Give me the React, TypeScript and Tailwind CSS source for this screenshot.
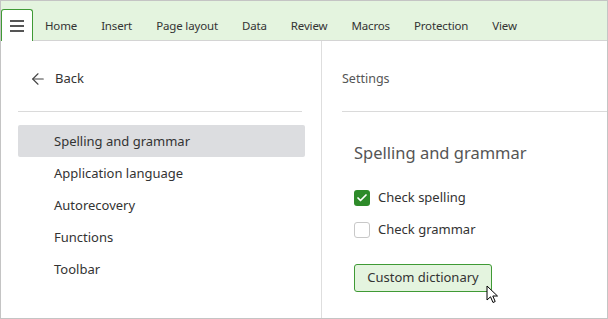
import { ArrowLeft, Check } from 'lucide-react';

const tabs = ['Home', 'Insert', 'Page layout', 'Data', 'Review', 'Macros', 'Protection', 'View'];
const sections = ['Spelling and grammar', 'Application language', 'Autorecovery', 'Functions', 'Toolbar'];

function Cursor() {
  return (
    <svg width="14" height="20" viewBox="0 0 14 20" className="absolute left-[485px] top-[284px]">
      <path d="M1 1 L1 15 L4.5 11.8 L7 17.5 L9.2 16.5 L6.8 11 L11.5 11 Z" fill="#fff" stroke="#000" strokeWidth="1" strokeLinejoin="round" />
    </svg>
  );
}

export default function App() {
  return (
    <div
      className="relative w-[608px] h-[319px] border border-[#c4c4c4] bg-white flex flex-col text-[#333] overflow-hidden"
      style={{ fontFamily: '"Noto Sans", "Open Sans", sans-serif' }}
    >
      <div className="h-[40px] shrink-0 bg-[#e4f4df] border-b border-[#d4d4d4] flex items-end">
        <button className="w-8 h-8 -mb-px bg-white border border-b-0 border-[#3f9a35] rounded-t-[3px] flex flex-col items-center justify-center gap-[3px]">
          <span className="block w-[14px] h-[2px] bg-[#555]" />
          <span className="block w-[14px] h-[2px] bg-[#555]" />
          <span className="block w-[14px] h-[2px] bg-[#555]" />
        </button>
        {tabs.map((t) => (
          <div key={t} className="h-8 px-3 pt-[3px] flex items-center text-[11.5px] tracking-[-0.15px] text-[#333]">
            {t}
          </div>
        ))}
      </div>

      <div className="flex flex-1 min-h-0">
        <div className="w-[321px] shrink-0 border-r border-[#dedede] pl-[17px] pr-[16px] pt-[22px]">
          <div className="h-8 flex items-center pl-[11px] gap-[8px] text-[13px]">
            <ArrowLeft size={18} strokeWidth={1.5} className="text-[#444]" />
            <span>Back</span>
          </div>
          <div className="mt-4 mr-[3px] border-t border-[#dadada]" />
          <div className="mt-[13px] flex flex-col">
            {sections.map((s, i) => (
              <div
                key={s}
                className={`h-8 pt-[2px] flex items-center pl-9 text-[13px] rounded-[2px] ${i === 0 ? 'bg-[#dcdde0]' : ''}`}
              >
                {s}
              </div>
            ))}
          </div>
        </div>

        <div className="flex-1 pl-5 pt-[22px]">
          <div className="h-8 flex items-center text-[12.5px] text-[#555]">Settings</div>
          <div className="mt-4 border-t border-[#dadada]" />
          <div className="pl-3">
            <div className="mt-[29px] text-[16.5px] text-[#555] leading-[24px]">Spelling and grammar</div>
            <div className="mt-[25px] flex flex-col gap-4">
              <label className="flex items-center gap-2 text-[13px] h-4">
                <span className="w-4 h-4 rounded-[3px] bg-[#2e8b2a] flex items-center justify-center">
                  <Check size={12} strokeWidth={3.5} className="text-white" />
                </span>
                Check spelling
              </label>
              <label className="flex items-center gap-2 text-[13px] h-4">
                <span className="w-4 h-4 rounded-[3px] border border-[#c8c8c8] bg-white" />
                Check grammar
              </label>
            </div>
            <button className="mt-[26px] h-7 w-[138px] rounded-[3px] border border-[#3f9a35] bg-[#e4f4df] text-[13px] text-[#333]">
              Custom dictionary
            </button>
          </div>
        </div>
      </div>
      <Cursor />
    </div>
  );
}
